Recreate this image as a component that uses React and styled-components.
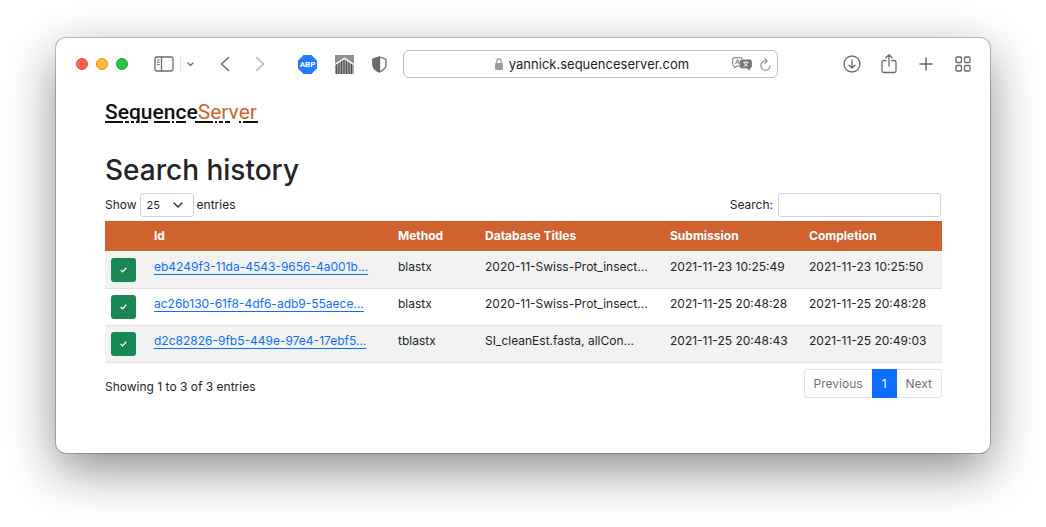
import React from "react";
import styled, { createGlobalStyle } from "styled-components";

const Global = createGlobalStyle`
  *, *::before, *::after { box-sizing: border-box; }
  body {
    margin: 0;
    background: #fff;
    color: #212529;
    font: 12px/18px Inter, "Liberation Sans", sans-serif;
  }
  button, input, select { font: inherit; color: inherit; }
`;

const Desktop = styled.div`
  padding: 38px 56px 74px;
  overflow: hidden;
`;

const Window = styled.div`
  background: #fff;
  border-radius: 10px;
  box-shadow: 0 0 0 1px rgba(0, 0, 0, 0.22), 0 17px 50px rgba(0, 0, 0, 0.45);
`;

const Toolbar = styled.header`
  display: flex;
  align-items: center;
  height: 52px;
  padding: 0 18px 0 20px;
`;

const Group = styled.div`
  display: flex;
  align-items: center;
  gap: ${(p) => p.$gap}px;
  margin-right: ${(p) => p.$after || 0}px;
`;

const Light = styled.button`
  width: 12px;
  height: 12px;
  padding: 0;
  border: 1px solid ${(p) => p.$edge};
  border-radius: 50%;
  background: ${(p) => p.$fill};
`;

const IconButton = styled.button`
  display: flex;
  padding: 0;
  border: 0;
  background: none;
  color: ${(p) => (p.$muted ? "#b9b9b9" : "#6b6b6b")};
  svg { display: block; }
`;

const Divider = styled.span`
  width: 1px;
  height: 18px;
  background: #e4e4e4;
`;

const Address = styled.div`
  display: flex;
  flex: 1;
  align-items: center;
  justify-content: space-between;
  height: 28px;
  margin-right: 65px;
  padding: 0 6px 0 48px;
  border: 1px solid #bdbdbd;
  border-radius: 6px;
`;

const Url = styled.span`
  display: flex;
  flex: 1;
  align-items: center;
  justify-content: center;
  gap: 6px;
  color: #1d1d1d;
  font-size: 13px;
`;

const Page = styled.main`
  padding: 10px 48px 55px 49px;
`;

const Logo = styled.a`
  display: inline-block;
  color: #111;
  font-family: Roboto, "Liberation Sans", sans-serif;
  font-size: 21px;
  font-weight: 500;
  line-height: 24px;
  text-decoration: none;
  span { color: #d0622f; font-weight: 400; }
  svg { display: block; margin-top: -3px; }
`;

const Title = styled.h1`
  margin: 28px 0 5px;
  font-size: 28px;
  font-weight: 500;
  line-height: 36px;
`;

const Bar = styled.div`
  display: flex;
  align-items: center;
  justify-content: space-between;
`;

const Footer = styled(Bar)`
  align-items: flex-end;
  margin-top: 6px;
`;

const Summary = styled.p`
  margin: 0;
  padding-bottom: 2px;
`;

const Field = styled.label`
  display: flex;
  align-items: center;
  gap: 3px;
`;

const SelectBox = styled.span`
  display: grid;
  align-items: center;
  select, svg { grid-area: 1 / 1; }
  svg { justify-self: end; margin-right: 11px; pointer-events: none; }
`;

const Select = styled.select`
  appearance: none;
  width: 54px;
  height: 24px;
  padding: 0 6px;
  border: 1px solid #ced4da;
  border-radius: 3px;
  background: #fff;
  font-size: 11px;
`;

const SearchInput = styled.input`
  width: 163px;
  height: 24px;
  margin: 0 1px 0 2px;
  padding: 0 6px;
  border: 1px solid #ced4da;
  border-radius: 3px;
`;

const Table = styled.table`
  width: 100%;
  margin-top: 4px;
  border-collapse: separate;
  border-spacing: 0;
  table-layout: fixed;
`;

const Head = styled.th`
  height: 31px;
  padding: 0 6px;
  border-bottom: 1px solid #fff;
  background: #d0622f;
  background-clip: padding-box;
  color: #fff;
  font-weight: 700;
  text-align: left;
`;

const Row = styled.tr`
  background: ${(p) => (p.$striped ? "#f2f2f2" : "#fff")};
`;

const Cell = styled.td`
  height: 37px;
  padding: 6px;
  border-bottom: 1px solid #dee2e6;
  vertical-align: top;
  white-space: nowrap;
`;

const Done = styled.button`
  display: flex;
  align-items: center;
  justify-content: center;
  width: 25px;
  height: 24px;
  padding: 0;
  border: 0;
  border-radius: 3px;
  background: #198754;
`;

const JobLink = styled.a`
  color: #0d6efd;
  text-decoration: underline;
  text-underline-offset: 3px;
`;

const Pages = styled.nav`
  display: flex;
  height: 29px;
  border: 1px solid #dee2e6;
  border-radius: 3px;
`;

const PageButton = styled.button`
  margin: ${(p) => (p.$active ? "-1px 0" : "0")};
  padding: 0 ${(p) => (p.$active ? 10 : 9)}px;
  border: 0;
  background: ${(p) => (p.$active ? "#0d6efd" : "none")};
  color: ${(p) => (p.$active ? "#fff" : "#6c757d")};
`;

const columns = [
  ["", 43],
  ["Id", 244],
  ["Method", 87],
  ["Database Titles", 185],
  ["Submission", 139],
  ["Completion", 139],
];

const jobs = [
  ["eb4249f3-11da-4543-9656-4a001b...", "blastx", "2020-11-Swiss-Prot_insect...", "2021-11-23 10:25:49", "2021-11-23 10:25:50"],
  ["ac26b130-61f8-4df6-adb9-55aece...", "blastx", "2020-11-Swiss-Prot_insect...", "2021-11-25 20:48:28", "2021-11-25 20:48:28"],
  ["d2c82826-9fb5-449e-97e4-17ebf5...", "tblastx", "SI_cleanEst.fasta, allCon...", "2021-11-25 20:48:43", "2021-11-25 20:49:03"],
];

const logoDashes = [[0, 18], [20, 4], [26, 3], [31, 3], [36, 7], [49, 16], [67, 2], [71, 10], [90, 18], [110, 2], [114, 4], [120, 5], [134, 2], [138, 15]];

const Icon = ({ w, h, sw = 1.3, children }) => (
  <svg width={w} height={h} viewBox={`0 0 ${w} ${h}`} fill="none" stroke="currentColor" strokeWidth={sw} strokeLinecap="round" strokeLinejoin="round" aria-hidden="true">
    {children}
  </svg>
);

export default function App() {
  return (
    <Desktop>
      <Global />
      <Window>
        <Toolbar>
          <Group $gap={8} $after={26}>
            <Light aria-label="Close" $fill="#ff5f57" $edge="#dd4a43" />
            <Light aria-label="Minimise" $fill="#febc2e" $edge="#d39a25" />
            <Light aria-label="Zoom" $fill="#28c840" $edge="#1fa232" />
          </Group>
          <Group $gap={6} $after={26}>
            <IconButton aria-label="Sidebar">
              <Icon w={20} h={16}>
                <rect x="1" y="1" width="18" height="14" rx="1.8" />
                <path d="M7.5 1v14" />
                <path d="M3.3 4h2M3.3 6.3h2M3.3 8.6h2" strokeWidth="1" />
              </Icon>
            </IconButton>
            <Divider />
            <IconButton aria-label="Tab groups">
              <Icon w={7} h={5}><path d="M1 1l2.5 2.5L6 1" /></Icon>
            </IconButton>
          </Group>
          <Group $gap={25} $after={33}>
            <IconButton aria-label="Back">
              <Icon w={10} h={16} sw={1.6}><path d="M8.5 1.5L1.5 8l7 6.5" /></Icon>
            </IconButton>
            <IconButton $muted aria-label="Forward">
              <Icon w={10} h={16} sw={1.6}><path d="M1.5 1.5l7 6.5-7 6.5" /></Icon>
            </IconButton>
          </Group>
          <Group $gap={18} $after={16}>
            <IconButton aria-label="Adblock Plus">
              <svg width="19" height="19" viewBox="0 0 19 19">
                <path d="M5.6 0h7.8L19 5.6v7.8L13.4 19H5.6L0 13.4V5.6z" fill="#237bff" />
                <text x="9.5" y="12.3" textAnchor="middle" fontSize="8" fontWeight="700" fontFamily="Roboto, sans-serif" fill="#fff">ABP</text>
              </svg>
            </IconButton>
            <IconButton aria-label="Library">
              <svg width="19" height="19" viewBox="0 0 19 19">
                <path d="M0 0h19v19H0z" fill="#909090" />
                <path d="M0 9.5L9.5 3 19 9.5V19H0z" fill="#a8a8a8" />
                <path d="M1.5 9v10M4 8v11M6.5 6v13M9 5v14M11.5 6v13M14 8v11M16.5 9v10" stroke="#4a4a4a" strokeWidth="1.2" />
                <path d="M0 9.5L9.5 3.2 19 9.5" stroke="#fff" strokeWidth="1.3" fill="none" />
              </svg>
            </IconButton>
            <IconButton aria-label="Privacy report">
              <Icon w={15} h={17}>
                <path d="M7.5 1L14 3.2v5.3c0 3.500-3 6-6.500 7.500C4 14.500 1 12 1 8.500V3.200z" />
                <path d="M7.5 1v15C4 14.5 1 12 1 8.500V3.200z" fill="currentColor" />
              </Icon>
            </IconButton>
          </Group>
          <Address>
            <Url>
              <svg width="8" height="12" viewBox="0 0 8 12" aria-hidden="true">
                <rect y="5" width="8" height="7" rx="1" fill="#9d9d9d" />
                <path d="M1.7 5.5V3.2a2.3 2.3 0 0 1 4.6 0v2.3" fill="none" stroke="#9d9d9d" strokeWidth="1.2" />
              </svg>
              yannick.sequenceserver.com
            </Url>
            <Group $gap={8}>
              <IconButton aria-label="Translate">
                <svg width="20" height="14" viewBox="0 0 20 14" fill="none" stroke="#777" strokeLinejoin="round">
                  <path d="M8 9H5l-2.2 2V9H2a1.300 1.300 0 0 1-1.300-1.300V2A1.300 1.300 0 0 1 2 .7h7A1.300 1.300 0 0 1 10.300 2" />
                  <path d="M3.400 7.200L5.500 2.300l2.100 4.900M4.200 5.700h2.600" strokeWidth=".9" />
                  <path d="M9.500 3H18a1.300 1.300 0 0 1 1.300 1.300v5.200a1.300 1.300 0 0 1-1.300 1.300h-.6V13l-2.400-2.200H9.500a1.300 1.300 0 0 1-1.300-1.300V4.300A1.300 1.300 0 0 1 9.500 3z" fill="#777" />
                  <path d="M11 5.300h5.500M13.700 4.200v1.100M12 5.500c.6 1.800 2 3 3.900 3.700M15.500 5.500c-.6 1.800-2 3-3.900 3.700" stroke="#fff" strokeWidth=".9" />
                </svg>
              </IconButton>
              <IconButton $muted aria-label="Reload">
                <Icon w={11} h={13} sw={1.2}>
                  <path d="M10 7.500A4.600 4.600 0 1 1 5.500 3h1.500M5 .8L7.300 3 5 5.200" stroke="#969696" />
                </Icon>
              </IconButton>
            </Group>
          </Address>
          <Group $gap={19}>
            <IconButton aria-label="Downloads">
              <Icon w={18} h={18}><circle cx="9" cy="9" r="8" /><path d="M9 5v8M6 10.200L9 13l3-2.800" /></Icon>
            </IconButton>
            <IconButton aria-label="Share">
              <Icon w={18} h={20}><path d="M6 6.500H3.700A1.700 1.700 0 0 0 2 8.200v8.600a1.700 1.700 0 0 0 1.700 1.700h10.600a1.700 1.700 0 0 0 1.700-1.700V8.200a1.700 1.700 0 0 0-1.700-1.700H12M9 12V1M5.800 3.800L9 .8l3.200 3" /></Icon>
            </IconButton>
            <IconButton aria-label="New tab">
              <Icon w={18} h={18} sw={1.5}><path d="M9 3v12M3 9h12" /></Icon>
            </IconButton>
            <IconButton aria-label="Tab overview">
              <Icon w={18} h={18}>
                <rect x="2" y="2" width="5.5" height="5.5" rx="1" /><rect x="10.5" y="2" width="5.5" height="5.5" rx="1" />
                <rect x="2" y="10.5" width="5.5" height="5.5" rx="1" /><rect x="10.5" y="10.5" width="5.5" height="5.5" rx="1" />
              </Icon>
            </IconButton>
          </Group>
        </Toolbar>
        <Page>
          <Logo href="#">
            Sequence<span>Server</span>
            <svg width="153" height="2" viewBox="0 0 153 2" fill="#111" aria-hidden="true">
              {logoDashes.map(([x, w]) => <rect key={x} x={x} width={w} height="2" />)}
            </svg>
          </Logo>
          <Title>Search history</Title>
          <Bar>
            <Field>
              Show
              <SelectBox>
                <Select defaultValue="25"><option>10</option><option>25</option><option>50</option></Select>
                <Icon w={10} h={6}><path d="M1 1l4 4 4-4" /></Icon>
              </SelectBox>
              entries
            </Field>
            <Field>Search: <SearchInput type="search" /></Field>
          </Bar>
          <Table>
            <colgroup>{columns.map(([n, w]) => <col key={n} style={{ width: w }} />)}</colgroup>
            <thead><tr>{columns.map(([n]) => <Head key={n} scope="col">{n}</Head>)}</tr></thead>
            <tbody>
              {jobs.map(([id, ...rest], i) => (
                <Row key={id} $striped={i % 2 === 0}>
                  <Cell>
                    <Done aria-label="Completed">
                      <svg width="7" height="6" viewBox="0 0 7 6" fill="none" stroke="#fff" strokeWidth="1.3"><path d="M.7 3l1.900 1.900L6.300.8" /></svg>
                    </Done>
                  </Cell>
                  <Cell><JobLink href="#">{id}</JobLink></Cell>
                  {rest.map((text, j) => <Cell key={j}>{text}</Cell>)}
                </Row>
              ))}
            </tbody>
          </Table>
          <Footer>
            <Summary>Showing 1 to 3 of 3 entries</Summary>
            <Pages aria-label="Pagination">
              <PageButton>Previous</PageButton>
              <PageButton $active>1</PageButton>
              <PageButton>Next</PageButton>
            </Pages>
          </Footer>
        </Page>
      </Window>
    </Desktop>
  );
}
